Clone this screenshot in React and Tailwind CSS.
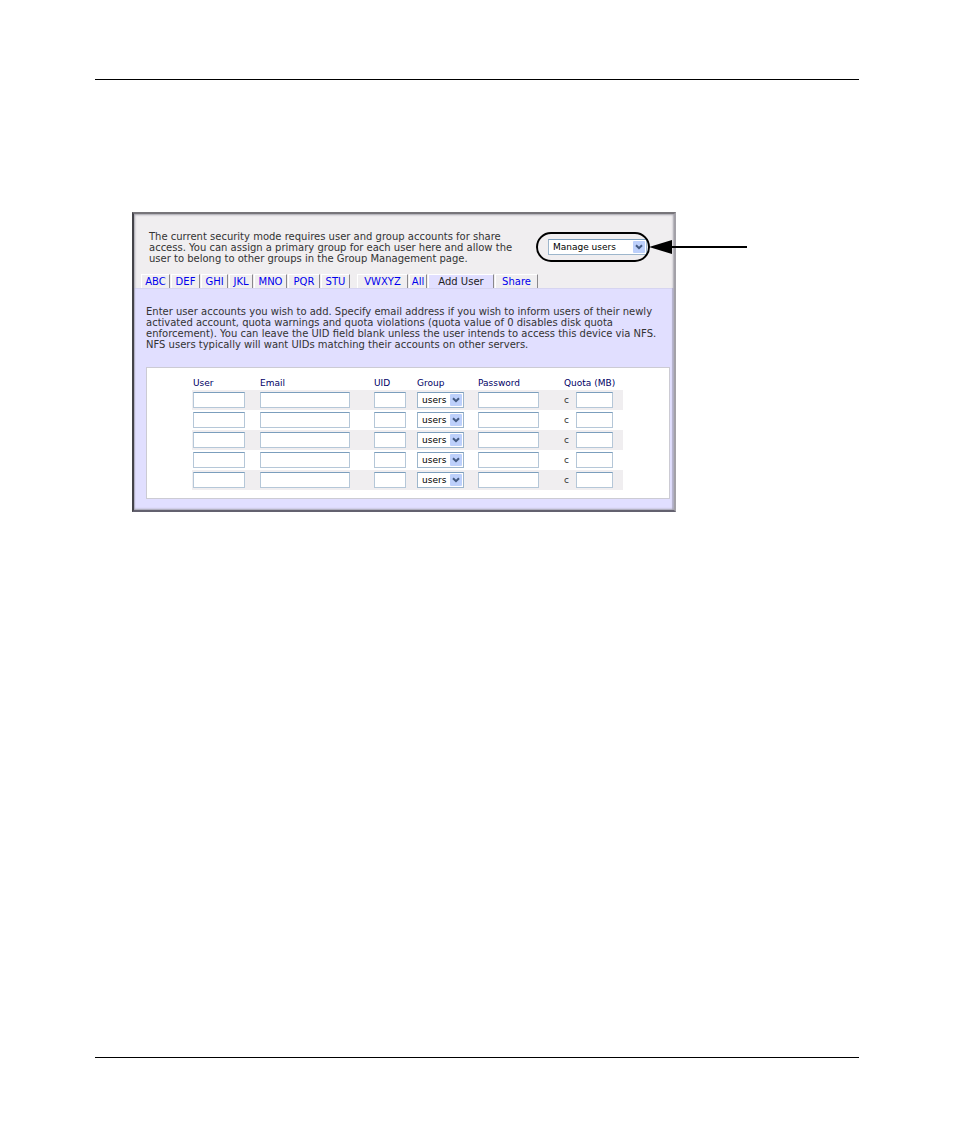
import React, { useState } from 'react'

const TABS = [
	{ id: 'abc', label: 'ABC', className: 'w-[29px]' },
	{ id: 'def', label: 'DEF', className: 'w-[29px]' },
	{ id: 'ghi', label: 'GHI', className: 'w-[27px]' },
	{ id: 'jkl', label: 'JKL', className: 'w-[24px]' },
	{ id: 'mno', label: 'MNO', className: 'w-[33px]' },
	{ id: 'pqr', label: 'PQR', className: 'w-[32px]' },
	{ id: 'stu', label: 'STU', className: 'w-[29px]' },
	{ id: 'vwxyz', label: 'VWXYZ', className: 'w-[51px] ml-[6px]' },
	{ id: 'all', label: 'All', className: 'w-[18px]' },
	{ id: 'add', label: 'Add User', className: 'w-[66px]' },
	{ id: 'share', label: 'Share', className: 'w-[43px]' }
]

const COLUMNS = [
	{ label: 'User', className: 'w-[67px]' },
	{ label: 'Email', className: 'w-[114px]' },
	{ label: 'UID', className: 'w-[43px]' },
	{ label: 'Group', className: 'w-[61px]' },
	{ label: 'Password', className: 'w-[86px]' },
	{ label: 'Quota (MB)', className: 'w-[60px]' }
]

const EMPTY_ROW = { user: '', email: '', uid: '', group: 'users', password: '', quota: '' }

function TextBox({ className, ...props }) {
	return (
		<input
			className={`block h-4 bg-white border border-[#b5c7d8] border-t-[#7b9ebd] px-0.5 text-[9px] text-black outline-none ${className}`}
			{...props}
		/>
	)
}

function DropDown({ className, children, ...props }) {
	return (
		<span className={`relative block ${className}`}>
			<select
				className="block w-full h-full appearance-none bg-white border border-[#9db6cc] border-t-[#7b9ebd] pl-1 text-[9px] leading-3 text-black outline-none"
				{...props}
			>
				{children}
			</select>
			<svg
				className="absolute right-0.5 top-0.5 bottom-0.5 my-auto w-3 h-3 pointer-events-none"
				viewBox="0 0 12 12"
				aria-hidden="true"
			>
				<rect width="12" height="12" rx="1" fill="#bdd0fb" />
				<path d="M3 4.200 6 7.200 9 4.200" fill="none" stroke="#42597f" strokeWidth="2" />
			</svg>
		</span>
	)
}

export default function App() {
	const [tab, setTab] = useState('add')
	const [mode, setMode] = useState('Manage users')
	const [rows, setRows] = useState(Array.from({ length: 5 }, () => EMPTY_ROW))

	const handleChange = (index, field, value) => {
		setRows(rows.map((row, i) => (i === index ? { ...row, [field]: value } : row)))
	}

	return (
		<div className="min-h-screen flex flex-col bg-white px-[95px] pt-[79px] pb-[87px] font-['DejaVu_Sans',Verdana,sans-serif] text-[10px] leading-[11px] text-[#333]">
			<hr className="border-0 h-px bg-black" />

			<main className="flex-1 pt-[132px] pl-[37px]">
				<section className="max-w-[544px] bg-[#f0eef0] border-2 border-t-[#77757a] border-r-[#a3a1a8] border-b-[#63616f] border-l-[#444349] shadow-[inset_0_0_2px_1px_#a5a3ad]">
					{/* Intro and mode selector */}
					<div className="flex justify-between pt-[17px] pl-[15px] pr-[27px] h-[60px]">
						<p className="whitespace-nowrap">
							The current security mode requires user and group accounts for share<br />
							access. You can assign a primary group for each user here and allow the<br />
							user to belong to other groups in the Group Management page.
						</p>
						<div className="relative mt-2 w-[99px] h-4 shrink-0">
							<DropDown
								className="w-full h-4"
								aria-label="Mode"
								value={mode}
								onChange={(e) => setMode(e.target.value)}
							>
								<option>Manage users</option>
								<option>Manage groups</option>
							</DropDown>
							{/* Callout */}
							<svg
								className="absolute -left-3 -top-2 w-[212px] h-8 pointer-events-none"
								viewBox="0 0 212 32"
								aria-hidden="true"
							>
								<rect x="1" y="2" width="112" height="28" rx="14" fill="none" stroke="#000" strokeWidth="2" />
								<path d="M113 16 136 9V23Z" fill="#000" />
								<path d="M134 16H211" stroke="#000" strokeWidth="2" />
							</svg>
						</div>
					</div>

					<nav className="flex items-stretch h-[14px] pl-[7px] gap-px">
						{TABS.map((item) => (
							<button
								key={item.id}
								type="button"
								onClick={() => setTab(item.id)}
								className={`shrink-0 h-[14px] leading-[14px] text-center whitespace-nowrap border-t border-l border-r border-t-white border-l-white border-r-[#8a888c] cursor-pointer ${item.className} ${
									tab === item.id ? 'bg-[#e1dfff] border-t-[#e1dfff] border-l-[#e1dfff] text-[#222]' : 'text-[#0000ee]'
								}`}
							>
								{item.label}
							</button>
						))}
					</nav>

					<div className="bg-[#e1dfff] pt-[18px] pl-3 pr-1 pb-[11px] shadow-[inset_0_-1px_2px_#a5a3ad,inset_1px_0_1px_#b5b3cc,inset_-2px_0_1px_#b5b3cc]">
						<p className="whitespace-nowrap">
							Enter user accounts you wish to add. Specify email address if you wish to inform users of their newly<br />
							activated account, quota warnings and quota violations (quota value of 0 disables disk quota<br />
							enforcement). You can leave the UID field blank unless the user intends to access this device via NFS.<br />
							NFS users typically will want UIDs matching their accounts on other servers.
						</p>

						<div className="mt-[17px] bg-white border border-[#cccbd4] pt-[9px] pb-2 pl-[45px] text-[9px]">
							<table className="w-[431px] table-fixed border-collapse">
								<thead>
									<tr className="h-[13px]">
										{COLUMNS.map((col) => (
											<th
												key={col.label}
												scope="col"
												className={`p-0 pl-px text-left font-normal text-[#000066] whitespace-nowrap ${col.className}`}
											>
												{col.label}
											</th>
										))}
									</tr>
								</thead>
								<tbody>
									{rows.map((row, i) => (
										<tr key={i} className="h-5 odd:bg-[#f0eef0]">
											<td className="p-0 pl-px">
												<TextBox className="w-[52px]" type="text" aria-label={`User ${i + 1}`} value={row.user} onChange={(e) => handleChange(i, 'user', e.target.value)} />
											</td>
											<td className="p-0 pl-px">
												<TextBox className="w-[90px]" type="email" aria-label={`Email ${i + 1}`} value={row.email} onChange={(e) => handleChange(i, 'email', e.target.value)} />
											</td>
											<td className="p-0 pl-px">
												<TextBox className="w-8" type="text" aria-label={`UID ${i + 1}`} value={row.uid} onChange={(e) => handleChange(i, 'uid', e.target.value)} />
											</td>
											<td className="p-0 pl-px">
												<DropDown className="w-[47px] h-4" aria-label={`Group ${i + 1}`} value={row.group} onChange={(e) => handleChange(i, 'group', e.target.value)}>
													<option>users</option>
													<option>admin</option>
												</DropDown>
											</td>
											<td className="p-0 pl-px">
												<TextBox className="w-[61px]" type="password" aria-label={`Password ${i + 1}`} value={row.password} onChange={(e) => handleChange(i, 'password', e.target.value)} />
											</td>
											<td className="p-0 pl-px">
												<label className="flex items-center gap-1.5">
													<span className="w-[6px]">c</span>
													<TextBox className="w-[37px]" type="text" value={row.quota} onChange={(e) => handleChange(i, 'quota', e.target.value)} />
												</label>
											</td>
										</tr>
									))}
								</tbody>
							</table>
						</div>
					</div>
				</section>
			</main>

			<hr className="border-0 h-px bg-black" />
		</div>
	)
}
